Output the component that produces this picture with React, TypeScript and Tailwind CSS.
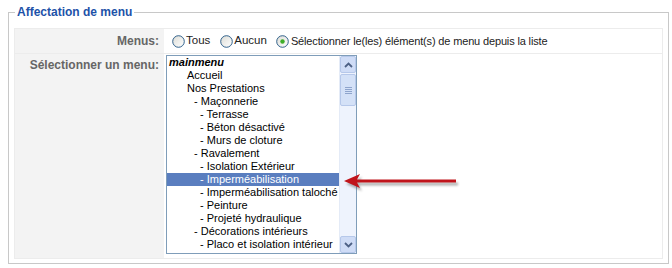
import React from "react";

const items: { text: string; pl: number; sel?: boolean; bold?: boolean }[] = [
  { text: "mainmenu", pl: 2, bold: true },
  { text: "Accueil", pl: 20 },
  { text: "Nos Prestations", pl: 20 },
  { text: "- Maçonnerie", pl: 27 },
  { text: "- Terrasse", pl: 33 },
  { text: "- Béton désactivé", pl: 33 },
  { text: "- Murs de cloture", pl: 33 },
  { text: "- Ravalement", pl: 27 },
  { text: "- Isolation Extérieur", pl: 33 },
  { text: "- Imperméabilisation", pl: 33, sel: true },
  { text: "- Imperméabilisation taloché", pl: 33 },
  { text: "- Peinture", pl: 33 },
  { text: "- Projeté hydraulique", pl: 33 },
  { text: "- Décorations intérieurs", pl: 27 },
  { text: "- Placo et isolation intérieur", pl: 33 },
];

function Radio({ checked }: { checked?: boolean }) {
  return (
    <svg width="13" height="13" viewBox="0 0 13 13" className="shrink-0">
      <defs>
        <linearGradient id={checked ? "rg1" : "rg0"} x1="0" y1="0" x2="1" y2="1">
          <stop offset="0" stopColor="#dcdcd6" />
          <stop offset="1" stopColor="#ffffff" />
        </linearGradient>
      </defs>
      <circle cx="6.5" cy="6.5" r="5.8" fill={`url(#${checked ? "rg1" : "rg0"})`} stroke="#1c5180" strokeWidth="0.9" />
      {checked && <circle cx="6.5" cy="6.5" r="2.2" fill="#3fae29" />}
    </svg>
  );
}

export default function App() {
  return (
    <div className="w-[672px] h-[268px] bg-white relative" style={{ fontFamily: "'Liberation Sans', Arial, sans-serif" }}>
      <fieldset className="absolute left-[8px] top-[4px] w-[661px] h-[260px] border border-[#c8c8c8] px-[5px] pb-[5px]">
        <legend className="ml-[1px] px-[2px] text-[12px] font-bold text-[#1d52a8] leading-[16px]">Affectation de menu</legend>
        <div className="mt-[8px] border border-[#ececec] flex flex-col">
          <div className="flex h-[25px] border-b border-[#ececec]">
            <div className="w-[149px] bg-[#f3f3f3] text-right pr-[5px] text-[12px] font-bold text-[#666] leading-[25px]">Menus:</div>
            <div className="flex-1 flex items-center pl-[8px] text-[11.5px] text-[#222]">
              <Radio />
              <span className="ml-[1px] mr-[10px]">Tous</span>
              <Radio />
              <span className="ml-[1px] mr-[9px]">Aucun</span>
              <Radio checked />
              <span className="ml-[2px] text-[11px] tracking-[-0.15px]">Sélectionner le(les) élément(s) de menu depuis la liste</span>
            </div>
          </div>
          <div className="flex h-[204px]">
            <div className="w-[149px] bg-[#f3f3f3] text-right pr-[5px] text-[12px] font-bold text-[#666] pt-[3px] leading-[16px]">Sélectionner un menu:</div>
            <div className="flex-1 pl-[2px] pt-[1px] relative">
              <div className="w-[191px] h-[199px] border border-[#7f9db9] flex bg-white">
                <div className="flex-1 min-w-0 overflow-hidden flex flex-col text-[11px] text-black">
                  {items.map((it, i) => (
                    <div
                      key={i}
                      className={`h-[13px] leading-[13px] whitespace-nowrap ${it.sel ? "bg-[#5a7ebf] text-white" : ""} ${it.bold ? "font-bold italic" : ""}`}
                      style={{ paddingLeft: it.pl }}
                    >
                      {it.text}
                    </div>
                  ))}
                </div>
                <div className="w-[17px] shrink-0 bg-[#eef3fd] flex flex-col border-l border-[#e4ebf7]">
                  <div className="h-[17px] border border-[#b6c8ea] rounded-[2px] bg-[#cfdcf6] flex items-center justify-center">
                    <svg width="9" height="6" viewBox="0 0 9 6"><path d="M1 5 L4.5 1.5 L8 5" fill="none" stroke="#4d6185" strokeWidth="1.8" /></svg>
                  </div>
                  <div className="h-[32px] mt-[1px] border border-[#b6c8ea] rounded-[2px] bg-[#d4e1f7] flex flex-col items-center justify-center gap-[1px]">
                    {[0, 1, 2, 3].map((k) => (
                      <div key={k} className="w-[7px] h-[1px] bg-[#8ea4cc]" />
                    ))}
                  </div>
                  <div className="flex-1" />
                  <div className="h-[17px] border border-[#b6c8ea] rounded-[2px] bg-[#cfdcf6] flex items-center justify-center">
                    <svg width="9" height="6" viewBox="0 0 9 6"><path d="M1 1 L4.5 4.5 L8 1" fill="none" stroke="#4d6185" strokeWidth="1.8" /></svg>
                  </div>
                </div>
              </div>
              <svg className="absolute left-[179px] top-[118px]" width="120" height="22" viewBox="0 0 120 22">
                <defs>
                  <filter id="sh" x="-20%" y="-50%" width="140%" height="200%">
                    <feGaussianBlur stdDeviation="1.3" />
                  </filter>
                </defs>
                <g filter="url(#sh)" opacity="0.45" transform="translate(2,3)">
                  <path d="M1 9 L17 2 L14 7.5 L113 7.5 L113 10.5 L14 10.5 L17 16 Z" fill="#555" />
                </g>
                <path d="M1 9 L17 2 L14 7.5 L113 7.5 L113 10.5 L14 10.5 L17 16 Z" fill="#c0141b" />
              </svg>
            </div>
          </div>
        </div>
      </fieldset>
    </div>
  );
}
